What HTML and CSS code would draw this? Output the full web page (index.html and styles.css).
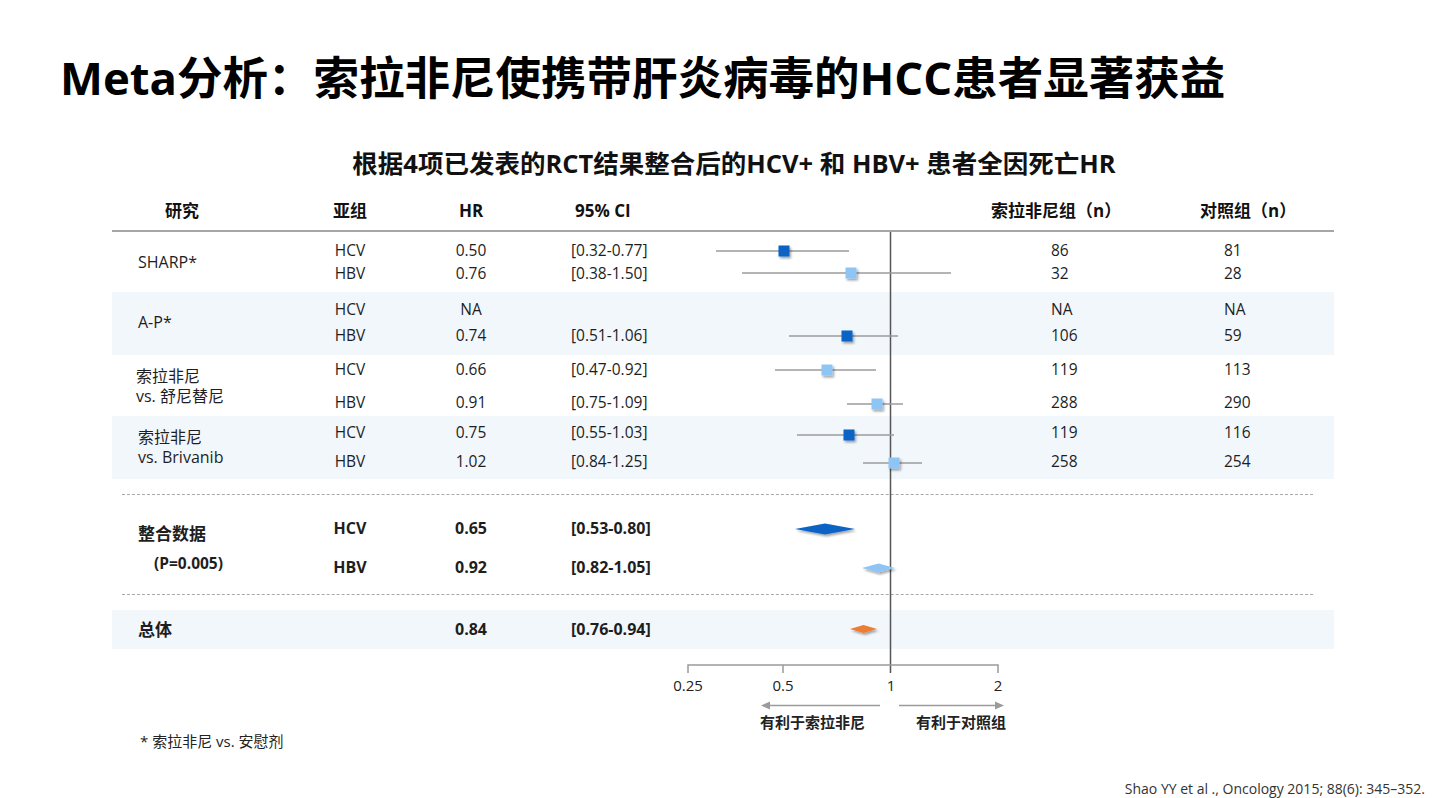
FILE: index.html
```html
<!DOCTYPE html>
<html lang="zh-CN">
<head>
<meta charset="utf-8">
<title>Meta分析</title>
<link rel="stylesheet" href="styles.css">
</head>
<body>
<div class="slide">
  <h1 class="title">Meta分析：索拉非尼使携带肝炎病毒的HCC患者显著获益</h1>

  <section class="chart">
    <h2 class="subtitle">根据4项已发表的RCT结果整合后的HCV+ 和 HBV+ 患者全因死亡HR</h2>

    <div class="cols head">
      <div class="h-study">研究</div>
      <div class="sub">亚组</div>
      <div class="hr">HR</div>
      <div class="h-ci">95% CI</div>
      <div class="plot"></div>
      <div class="h-n1">索拉非尼组（n）</div>
      <div class="h-n2">对照组（n）</div>
    </div>

    <div class="cols group g1">
      <div class="study">SHARP*</div>
      <div class="sub">HCV</div><div class="hr">0.50</div><div class="ci">[0.32-0.77]</div><div class="plot"></div><div class="n1">86</div><div class="n2">81</div>
      <div class="sub">HBV</div><div class="hr">0.76</div><div class="ci">[0.38-1.50]</div><div class="plot"></div><div class="n1">32</div><div class="n2">28</div>
    </div>

    <div class="cols group g2 shade">
      <div class="study">A-P*</div>
      <div class="sub">HCV</div><div class="hr">NA</div><div class="ci"></div><div class="plot"></div><div class="n1">NA</div><div class="n2">NA</div>
      <div class="sub">HBV</div><div class="hr">0.74</div><div class="ci">[0.51-1.06]</div><div class="plot"></div><div class="n1">106</div><div class="n2">59</div>
    </div>

    <div class="cols group g3">
      <div class="study tight">索拉非尼<br>vs. 舒尼替尼</div>
      <div class="sub">HCV</div><div class="hr">0.66</div><div class="ci">[0.47-0.92]</div><div class="plot"></div><div class="n1">119</div><div class="n2">113</div>
      <div class="sub">HBV</div><div class="hr">0.91</div><div class="ci">[0.75-1.09]</div><div class="plot"></div><div class="n1">288</div><div class="n2">290</div>
    </div>

    <div class="cols group g4 shade">
      <div class="study">索拉非尼<br>vs. Brivanib</div>
      <div class="sub">HCV</div><div class="hr">0.75</div><div class="ci">[0.55-1.03]</div><div class="plot"></div><div class="n1">119</div><div class="n2">116</div>
      <div class="sub">HBV</div><div class="hr">1.02</div><div class="ci">[0.84-1.25]</div><div class="plot"></div><div class="n1">258</div><div class="n2">254</div>
    </div>

    <div class="sep first"></div>

    <div class="cols group pooled">
      <div class="study">整合数据<br><span class="pval">(P=0.005)</span></div>
      <div class="sub">HCV</div><div class="hr">0.65</div><div class="ci">[0.53-0.80]</div><div class="plot"></div><div class="n1"></div><div class="n2"></div>
      <div class="sub">HBV</div><div class="hr">0.92</div><div class="ci">[0.82-1.05]</div><div class="plot"></div><div class="n1"></div><div class="n2"></div>
    </div>

    <div class="sep"></div>

    <div class="cols overall shade">
      <div class="study">总体</div>
      <div class="sub"></div><div class="hr">0.84</div><div class="ci">[0.76-0.94]</div><div class="plot"></div><div class="n1"></div><div class="n2"></div>
    </div>

    <div class="axis">
      <div class="ticks">
        <span class="tick" style="left:576px">0.25</span>
        <span class="tick" style="left:671px">0.5</span>
        <span class="tick" style="left:779px">1</span>
        <span class="tick" style="left:886px">2</span>
      </div>
      <div class="favors">
        <span>有利于索拉非尼</span>
        <span>有利于对照组</span>
      </div>
    </div>
  </section>

  <p class="footnote">* 索拉非尼 vs. 安慰剂</p>
  <p class="cite">Shao YY et al ., Oncology 2015; 88(6): 345–352.</p>

  <svg class="plot-layer" width="1440" height="798" viewBox="0 0 1440 798" aria-hidden="true">
    <defs>
      <filter id="sh" x="-60%" y="-60%" width="220%" height="220%">
        <feDropShadow dx="1.5" dy="2" stdDeviation="1.3" flood-color="#000" flood-opacity="0.35"/>
      </filter>
    </defs>
    <line x1="890.5" y1="232" x2="890.5" y2="673" stroke="#555" stroke-width="1.5"/>
    <g stroke="#9b9b9b" stroke-width="1.5">
      <line x1="716" y1="251" x2="849" y2="251"/>
      <line x1="742" y1="273" x2="951" y2="273"/>
      <line x1="789" y1="336" x2="898" y2="336"/>
      <line x1="775" y1="370" x2="876" y2="370"/>
      <line x1="847" y1="404" x2="903" y2="404"/>
      <line x1="797" y1="435" x2="894" y2="435"/>
      <line x1="863" y1="463" x2="922" y2="463"/>
    </g>
    <g filter="url(#sh)">
      <rect x="778.5" y="245.5" width="11" height="11" fill="#0a62c6"/>
      <rect x="845.5" y="267.5" width="11" height="11" fill="#8ec5f5"/>
      <rect x="841.5" y="330.5" width="11" height="11" fill="#0a62c6"/>
      <rect x="821.5" y="364.5" width="11" height="11" fill="#8ec5f5"/>
      <rect x="871.5" y="398.5" width="11" height="11" fill="#8ec5f5"/>
      <rect x="843.5" y="429.5" width="11" height="11" fill="#0a62c6"/>
      <rect x="888.5" y="457.5" width="11" height="11" fill="#8ec5f5"/>
      <polygon points="795,529 825,523.5 855,529 825,534.5" fill="#0a62c6"/>
      <polygon points="862,568 878.5,563.5 895,568 878.5,572.5" fill="#8ec5f5"/>
      <polygon points="850,629 863.5,625 877,629 863.5,633" fill="#ed7d31"/>
    </g>
    <g stroke="#9b9b9b" stroke-width="1.5" fill="none">
      <polyline points="688,673 688,665 998,665 998,673"/>
      <line x1="783" y1="665" x2="783" y2="673"/>
      <line x1="880" y1="705.5" x2="768" y2="705.5"/>
      <line x1="899" y1="705.5" x2="996" y2="705.5"/>
    </g>
    <polygon points="761,705.5 770,701.5 770,709.5" fill="#9b9b9b"/>
    <polygon points="1004,705.5 995,701.5 995,709.5" fill="#9b9b9b"/>
  </svg>
</div>
</body>
</html>
```

FILE: styles.css
```css
* {
  box-sizing: border-box;
  margin: 0;
  padding: 0;
}

html,
body {
  width: 1440px;
  height: 798px;
  overflow: hidden;
  background: #ffffff;
}

body {
  font-family: "Open Sans", "Noto Sans CJK SC", sans-serif;
  color: #1e1e1e;
}

.slide {
  position: relative;
  width: 1440px;
  height: 798px;
}

.title {
  padding: 50px 0 0 60px;
  font-size: 45.5px;
  line-height: 54px;
  font-weight: 700;
  color: #000;
}

.chart {
  width: 1222px;
  margin-left: 112px;
}

.subtitle {
  margin-top: 43px;
  padding-left: 22px;
  font-size: 25.5px;
  line-height: 32px;
  font-weight: 700;
  text-align: center;
  color: #111;
}

.cols {
  display: grid;
  grid-template-columns: 184px 108px 134px 142px 300px 210px 144px;
}

.head {
  margin-top: 13px;
  height: 40px;
  line-height: 38px;
  font-size: 17px;
  font-weight: 700;
  color: #111;
  border-bottom: 2px solid #a6a6a6;
}

.h-study { padding-left: 53px; }
.h-ci { padding-left: 37px; }
.h-n1 { padding-left: 11px; }
.h-n2 { padding-left: 10px; }

.sub,
.hr {
  text-align: center;
}

.ci { padding-left: 33px; }
.n1 { padding-left: 71px; }
.n2 { padding-left: 34px; }

.group {
  font-size: 15.5px;
  line-height: 22px;
  grid-auto-rows: 22px;
}

.study {
  grid-row: span 2;
  align-self: center;
  padding-left: 26px;
  font-size: 16px;
  line-height: 20px;
}

.study.tight { padding-left: 24px; }

.shade { background: #f2f7fc; }

.g1 { padding: 7px 0 8px; row-gap: 1px; }
.g2 { padding: 6px 0 9px; row-gap: 4px; }
.g3 { padding: 3px 0 3px; row-gap: 11px; }
.g4 { padding: 5px 0 7px; row-gap: 7px; }

.sep {
  margin: 0 21px 0 10px;
  border-top: 1px dashed #a9a9a9;
}

.sep.first { margin-top: 15px; }

.pooled {
  padding: 21px 0 15px;
  row-gap: 15px;
  grid-auto-rows: 24px;
  font-size: 16px;
  line-height: 24px;
  font-weight: 700;
}

.pooled .study {
  padding-top: 1px;
  font-size: 17px;
  line-height: 29px;
}

.pval {
  display: inline-block;
  padding-left: 16px;
  font-size: 15.5px;
}

.overall {
  margin-top: 15px;
  height: 39px;
  line-height: 39px;
  font-size: 16px;
  font-weight: 700;
}

.overall .study {
  grid-row: auto;
  font-size: 17px;
  line-height: 39px;
}

.axis {
  padding-top: 26px;
}

.ticks {
  position: relative;
  height: 20px;
  font-size: 15px;
  line-height: 20px;
  color: #222;
}

.tick {
  position: absolute;
  top: 0;
  transform: translateX(-50%);
}

.favors {
  display: flex;
  gap: 51px;
  margin-top: 17px;
  padding-left: 648px;
  font-size: 15px;
  line-height: 20px;
  font-weight: 700;
  color: #222;
}

.footnote {
  padding-left: 140px;
  font-size: 15px;
  line-height: 18px;
  color: #222;
}

.cite {
  margin-top: 30px;
  padding-right: 15px;
  text-align: right;
  font-size: 14px;
  line-height: 18px;
  color: #333;
}

.plot-layer {
  position: absolute;
  left: 0;
  top: 0;
  pointer-events: none;
}
```
